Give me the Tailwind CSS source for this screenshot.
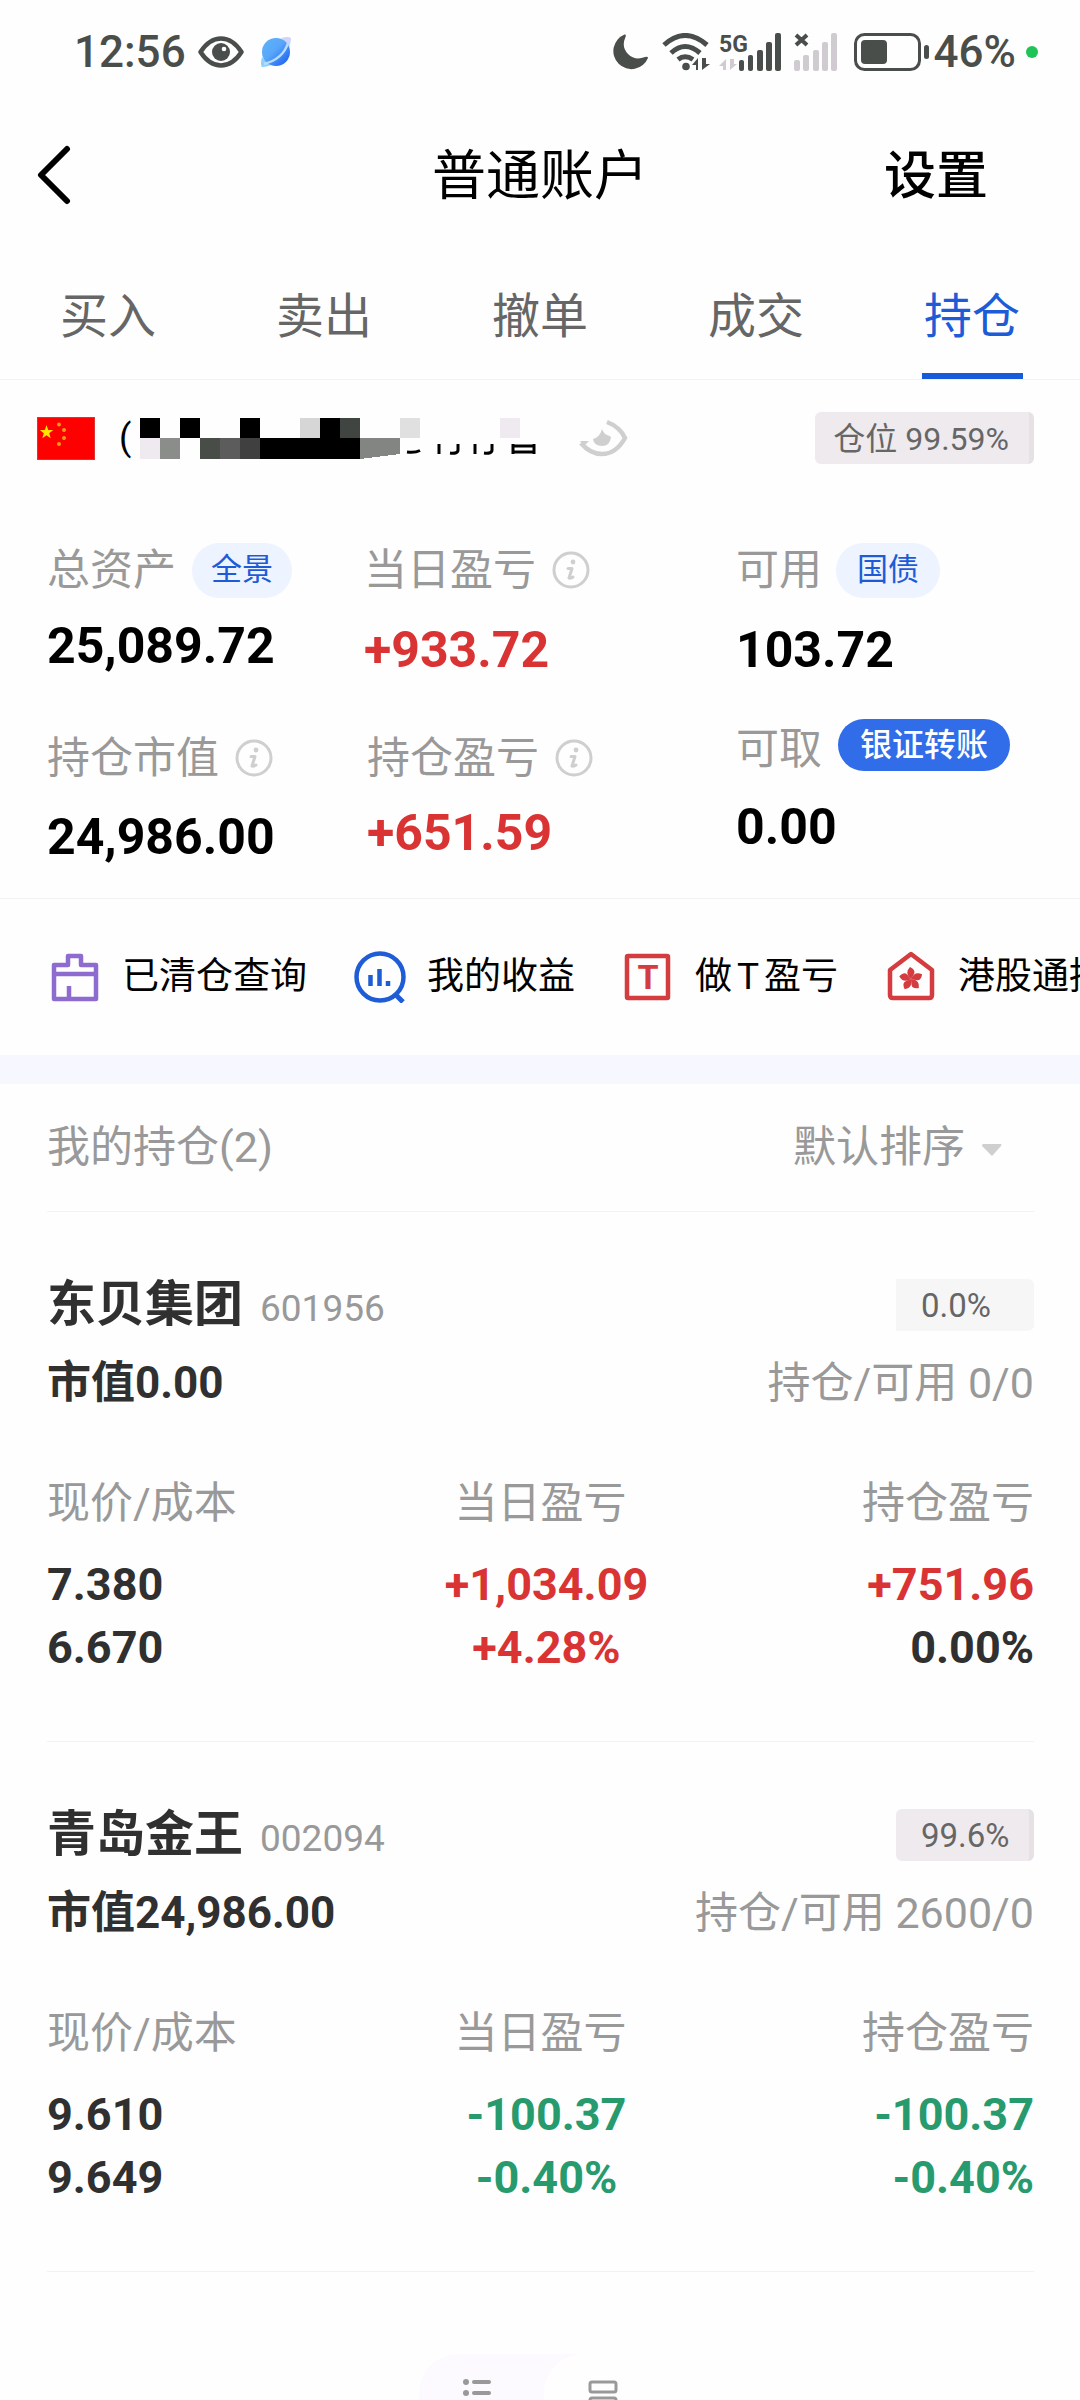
<!DOCTYPE html>
<html lang="zh-CN">
<head>
<meta charset="utf-8">
<meta name="viewport" content="width=device-width, initial-scale=1">
<title>普通账户</title>
<script src="https://cdn.jsdelivr.net/npm/@tailwindcss/browser@4"></script>
</head>
<body class="h-screen overflow-hidden bg-[#fefefe] font-['Roboto','Noto_Sans_CJK_SC',sans-serif] text-black">

<!-- Shared icons -->
<svg class="hidden" aria-hidden="true">
  <symbol id="info" viewBox="0 0 38 38">
    <circle cx="19" cy="19" r="17" fill="none" stroke="#cfcfcf" stroke-width="3"/>
    <circle cx="21" cy="11" r="2.4" fill="#cfcfcf"/>
    <path d="M16 17.500h4l-3 9.500q2 .5 4-1" fill="none" stroke="#cfcfcf" stroke-width="3" stroke-linecap="round" stroke-linejoin="round"/>
  </symbol>
</svg>

<!-- Status bar -->
<div class="flex h-[104px] items-center justify-between pl-[74px] pr-[42px] text-[44px] font-medium text-[#4a4e4a]">
  <div class="flex items-center">
    <span>12:56</span>
    <svg class="ml-3 h-[32px] w-[46px]" viewBox="0 0 46 32" aria-hidden="true">
      <path d="M2.500 16C9 6 16 2.500 23 2.500S37 6 43.500 16C37 26 30 29.500 23 29.500S9 26 2.500 16Z" fill="none" stroke="#4a4e4a" stroke-width="4.500" stroke-linejoin="round"/>
      <circle cx="23" cy="16" r="9" fill="#4a4e4a"/><circle cx="26" cy="13" r="2.300" fill="#fff"/>
    </svg>
    <svg class="ml-[17px] h-[30px] w-[30px]" viewBox="0 0 30 30" aria-hidden="true">
      <defs><linearGradient id="planet" x1="0" y1="0" x2="1" y2="1"><stop offset="0" stop-color="#5fb4fb"/><stop offset=".45" stop-color="#58a6fa"/><stop offset="1" stop-color="#1457ee"/></linearGradient></defs>
      <path d="M20 1Q28-1 30 1Q30 6 28 10Z" fill="#cfd5fa"/>
      <path d="M1 20Q-1 28 1 30Q6 30 10 28Z" fill="#8fd0fb"/>
      <circle cx="15" cy="15" r="14" fill="url(#planet)"/>
      <path d="M3 27Q22 22 27 6" fill="none" stroke="#b9dcfd" stroke-width="2.500"/>
    </svg>
  </div>
  <div class="flex items-center">
    <svg class="h-[38px] w-[38px]" viewBox="0 0 38 38" aria-hidden="true"><path d="M13.500 1.500A18 18 0 1 0 37 25Q37 23 34 24Q24 28 17 21T14.500 4Q15.500 1 13.500 1.500Z" fill="#4a4e4a"/></svg>
    <svg class="ml-[13px] h-[38px] w-[48px]" viewBox="0 0 48 38" fill="none" stroke="#4a4e4a" stroke-width="5" aria-hidden="true">
      <path d="M2 12Q23-7 45 12M9 20Q23 7 38 20M16 26.500Q23 21 31 26.500"/>
      <circle cx="24" cy="33.500" r="3.800" fill="#4a4e4a" stroke="none"/>
      <path d="M36 37V25l-6 7h4v5zM40 25V37l8-6h-4v-6z" fill="#4a4e4a" stroke="none"/>
    </svg>
    <svg class="ml-[9px] h-[38px] w-[64px] overflow-visible" viewBox="0 0 64 38" aria-hidden="true">
      <text x="0" y="19" font-size="23" font-weight="700" fill="#4a4e4a">5G</text>
      <path d="M7 37V26l-7 7h4v4zM11 26V37l7-6h-3v-5z" fill="#cfcbd0"/>
      <g fill="#4a4e4a"><rect x="20" y="27" width="5" height="11" rx="2"/><rect x="29" y="22" width="5" height="16" rx="2"/><rect x="38" y="17" width="6" height="21" rx="2"/><rect x="47" y="9" width="6" height="29" rx="2"/><rect x="56" y="0" width="6" height="38" rx="2"/></g>
    </svg>
    <svg class="ml-[11px] h-[38px] w-[46px]" viewBox="0 0 46 38" aria-hidden="true">
      <path d="M2 2l11 10M13 2L2 12" stroke="#4a4e4a" stroke-width="4"/>
      <g fill="#cfcbd0"><rect x="0" y="27" width="6" height="11" rx="2"/><rect x="9" y="22" width="6" height="16" rx="2"/><rect x="19" y="17" width="6" height="21" rx="2"/><rect x="28" y="9" width="6" height="29" rx="2"/><rect x="37" y="0" width="6" height="38" rx="2"/></g>
    </svg>
    <svg class="ml-[14px] h-[38px] w-[76px]" viewBox="0 0 76 38" aria-hidden="true">
      <rect x="1.500" y="1.500" width="64" height="35" rx="9" fill="none" stroke="#4a4e4a" stroke-width="3"/>
      <rect x="7" y="7" width="26" height="24" rx="4" fill="#4a4e4a"/>
      <rect x="70" y="12" width="5" height="14" rx="2.500" fill="#4a4e4a"/>
    </svg>
    <span class="ml-1">46%</span>
    <span class="ml-[10px] size-3 rounded-full bg-[#1fc356]"></span>
  </div>
</div>

<!-- Title bar -->
<header class="grid h-[142px] grid-cols-[1fr_auto_1fr] items-center">
  <a href="#" aria-label="返回" class="justify-self-start pl-[37px]">
    <svg class="h-[60px] w-[34px]" viewBox="0 0 34 60" fill="none" stroke="#000" stroke-width="6" stroke-linecap="round" stroke-linejoin="round"><path d="M30 4L4 30L30 56"/></svg>
  </a>
  <h1 class="pt-1 text-[54px] leading-[80px]">普通账户</h1>
  <button class="justify-self-end pt-1 pr-[92px] text-[52px] leading-[80px] font-medium">设置</button>
</header>

<!-- Tabs -->
<nav class="grid h-[134px] grid-cols-5 border-b border-[#f2f2f2] text-[48px] leading-[72px] text-[#666]">
  <a href="#" class="flex flex-col items-center pt-[35px]">买入</a>
  <a href="#" class="flex flex-col items-center pt-[35px]">卖出</a>
  <a href="#" class="flex flex-col items-center pt-[35px]">撤单</a>
  <a href="#" class="flex flex-col items-center pt-[35px]">成交</a>
  <a href="#" aria-current="page" class="flex flex-col items-center pt-[35px] text-[#1d5cd6]">持仓<span class="mt-auto h-[6px] w-[101px] bg-[#155bdc]"></span></a>
</nav>

<main>
  <!-- Account -->
  <div class="flex h-[116px] items-center pl-[37px] pr-[46px]">
    <svg class="h-[43px] w-[58px]" viewBox="0 0 58 43" role="img" aria-label="中国">
      <rect width="58" height="43" fill="#fe0000"/><rect x=".5" y=".5" width="57" height="42" fill="none" stroke="#d33"/>
      <path d="M9.500 8l1.700 5h5l-4 3.200 1.500 5-4.200-3-4.200 3 1.500-5-4-3.200h5z" fill="#ffe500"/>
      <g fill="#fb9a15"><circle cx="22" cy="7.500" r="2"/><circle cx="27" cy="13" r="2"/><circle cx="27" cy="21" r="2"/><circle cx="22" cy="27" r="2"/></g>
    </svg>
    <span class="ml-[24px] text-[36px] leading-[40px]">(</span>
    <svg class="ml-[9px] h-[41px] w-[400px]" viewBox="0 0 400 41" shape-rendering="crispEdges" aria-hidden="true">
      <path d="M0 0h20v20H0zM40 0h20v20H40zM100 0h20v20H100zM180 0h20v20H180zM120 20h100v21H120z"/>
      <path d="M160 0h20v20H160z" fill="#d6d6d6"/><path d="M200 0h20v20H200z" fill="#414541"/><path d="M260 0h20v20H260z" fill="#e0e0e0"/><path d="M360 0h20v20H360z" fill="#eeeaef"/>
      <path d="M0 20h20v21H0z" fill="#eeeaef"/><path d="M20 20h20v21H20z" fill="#8b8d8b"/><path d="M60 20h20v21H60z" fill="#484d48"/><path d="M80 20h20v21H80z" fill="#5b5c5b"/><path d="M100 20h20v21H100z" fill="#404040"/>
      <path d="M220 20h40v16l-40 5z" fill="#838583"/>
      <g fill="none" stroke="#000" stroke-width="3" shape-rendering="auto"><path d="M267 34q8 1 13-1.500"/><path d="M299 26v10M318 26v6q0 4-8 3M335 26v10M352 26v6q0 4-8 3M373 26v10M394 26v10M373 28h21M373 34h21"/></g>
    </svg>
    <button aria-label="隐藏金额" class="ml-[38px]">
      <svg class="h-[38px] w-[50px]" viewBox="0 0 50 38"><path d="M29 3Q42 8 47 19Q38 35 24 35Q12 35 3 24" fill="none" stroke="#cfcfcf" stroke-width="4.500"/><path d="M2 22h9l-5 5z" fill="#cfcfcf"/><path d="M24 10q2 5 5 6q3 1 4 2q-1 9-9 9t-9-7q7-2 9-10z" fill="#cfcfcf"/></svg>
    </button>
    <span class="ml-auto flex h-[52px] items-center rounded-md border-r-[5px] border-[#e5e1e5] bg-[#eeeaee] pl-[18px] pr-[20px] pt-[2px] text-[32px] text-[#666]">仓位 99.59%</span>
  </div>

  <!-- Assets -->
  <section class="grid grid-cols-[317fr_372fr_298fr] border-b border-[#f2f2f2] pb-[33px] pl-[47px] pr-[46px] pt-[46px] text-[50px] leading-[56px] font-bold">
    <dl class="flex flex-col">
      <dt class="flex items-center text-[43px] font-normal text-[#999]">总资产<button class="ml-[16px] h-[55px] rounded-full bg-[#edf3ff] px-[19px] text-[31px] leading-[52px] text-[#1d5cd6]">全景</button></dt>
      <dd class="mt-[20px]">25,089.72</dd>
      <dt class="mt-[56px] flex items-center text-[43px] font-normal text-[#999]">持仓市值<svg class="ml-[16px] size-[38px]" aria-hidden="true"><use href="#info"/></svg></dt>
      <dd class="mt-[23px]">24,986.00</dd>
    </dl>
    <dl class="flex flex-col">
      <dt class="flex items-center text-[43px] font-normal text-[#999]">当日盈亏<svg class="ml-[16px] size-[38px]" aria-hidden="true"><use href="#info"/></svg></dt>
      <dd class="mt-[24px] text-[#d93334]">+933.72</dd>
      <dt class="mt-[52px] flex items-center pl-[3px] text-[43px] font-normal text-[#999]">持仓盈亏<svg class="ml-[16px] size-[38px]" aria-hidden="true"><use href="#info"/></svg></dt>
      <dd class="mt-[19px] pl-[3px] text-[#d93334]">+651.59</dd>
    </dl>
    <dl class="flex flex-col">
      <dt class="flex items-center text-[43px] font-normal text-[#999]">可用<button class="ml-[14px] h-[55px] rounded-full bg-[#edf3ff] px-[21px] text-[31px] leading-[52px] text-[#1d5cd6]">国债</button></dt>
      <dd class="mt-[24px]">103.72</dd>
      <dt class="mt-[43px] flex items-start text-[43px] font-normal text-[#999]">可取<button class="ml-[16px] h-[52px] -mt-[2px] rounded-full bg-[#326de9] px-[22px] text-[32px] leading-[52px] font-medium text-white">银证转账</button></dt>
      <dd class="mt-[22px]">0.00</dd>
    </dl>
  </section>

  <!-- Shortcuts -->
  <nav class="flex h-[156px] items-center gap-[47px] overflow-hidden pl-[49px] text-[37px] whitespace-nowrap">
    <a href="#" class="flex shrink-0 items-center gap-[21px]">
      <svg class="size-[52px]" viewBox="0 0 52 52" fill="none" stroke="#8d6bcf" stroke-width="4.500" stroke-linejoin="round" aria-hidden="true"><path d="M5 14h14V5h13v9h15v34H5zM5 23h42M20 48V35"/></svg>
      已清仓查询</a>
    <a href="#" class="flex shrink-0 items-center gap-[21px]">
      <svg class="size-[52px]" viewBox="0 0 52 52" fill="none" stroke="#1f5dd6" stroke-width="4.500" aria-hidden="true"><circle cx="26" cy="26" r="23.500"/><path d="M42 44l7 7" stroke-width="5"/><path d="M16.500 24v11M25.500 18v17M34 30v5"/></svg>
      我的收益</a>
    <a href="#" class="flex shrink-0 items-center gap-[21px]">
      <svg class="size-[52px]" viewBox="0 0 52 52" aria-hidden="true"><rect x="5" y="5" width="41" height="42" rx="1" fill="none" stroke="#d43c3f" stroke-width="4.500"/><text x="26" y="38" text-anchor="middle" font-size="34" font-weight="700" fill="#d43c3f">T</text></svg>
      <span>做<span class="mx-[5px]">T</span>盈亏</span></a>
    <a href="#" class="flex shrink-0 items-center gap-[21px]">
      <svg class="size-[52px]" viewBox="0 0 52 52" aria-hidden="true"><path d="M5 19L26 3L47 19V44q0 3-3 3H8q-3 0-3-3z" fill="none" stroke="#d43c3f" stroke-width="4.500" stroke-linejoin="round"/>
        <g fill="#d43c3f"><path id="petal" d="M26 28q-7-6-1-12q6 3 4 7q-1 2-3 5z"/><use href="#petal" transform="rotate(72 26 28)"/><use href="#petal" transform="rotate(144 26 28)"/><use href="#petal" transform="rotate(216 26 28)"/><use href="#petal" transform="rotate(288 26 28)"/></g></svg>
      港股通持仓</a>
  </nav>

  <div class="h-[29px] bg-[#f7f7ff]"></div>

  <!-- Holdings -->
  <section class="pl-[47px] pr-[46px]">
    <div class="flex h-[128px] items-center justify-between border-b border-[#f2f2f2] text-[43px] text-[#999]">
      <h2>我的持仓(2)</h2>
      <label class="flex items-center pr-[32px]">
        <select aria-label="排序" class="appearance-none bg-transparent"><option>默认排序</option></select>
        <svg class="ml-[17px] mt-1 h-[12px] w-[20px]" viewBox="0 0 20 12" aria-hidden="true"><path d="M1 0h18q1 0 0 2l-9 10L0 2q0-2 1-2z" fill="#cfcfcf"/></svg>
      </label>
    </div>

    <article class="border-b border-[#f2f2f2] pb-[62px] pt-[63px] text-[43px] text-[#303030]">
      <div class="flex h-[60px] items-center justify-between">
        <h3 class="flex items-baseline text-[49px] font-bold">东贝集团<span class="ml-[17px] text-[37px] font-normal text-[#999]">601956</span></h3>
        <span class="flex h-[52px] w-[138px] items-center rounded-r-md bg-[#f6f6f6] pl-[25px] pt-[2px] text-[33px] text-[#666]">0.0%</span>
      </div>
      <div class="mt-[20px] flex justify-between leading-[56px]">
        <span class="text-[44px] font-bold">市值0.00</span>
        <span class="text-[#999]">持仓/可用 0/0</span>
      </div>
      <table class="mt-[64px] w-full table-fixed">
        <thead><tr class="h-[78px] align-top leading-[56px] text-[#999]">
          <th class="p-0 text-left font-normal">现价/成本</th><th class="p-0 text-center font-normal">当日盈亏</th><th class="p-0 text-right font-normal">持仓盈亏</th>
        </tr></thead>
        <tbody class="text-[45px] leading-[63px] font-bold">
          <tr><td class="p-0">7.380</td><td class="p-0 pl-3 text-center text-[#d93334]">+1,034.09</td><td class="p-0 text-right text-[#d93334]">+751.96</td></tr>
          <tr><td class="p-0">6.670</td><td class="p-0 pl-3 text-center text-[#d93334]">+4.28%</td><td class="p-0 text-right">0.00%</td></tr>
        </tbody>
      </table>
    </article>

    <article class="border-b border-[#f2f2f2] pb-[62px] pt-[63px] text-[43px] text-[#303030]">
      <div class="flex h-[60px] items-center justify-between">
        <h3 class="flex items-baseline text-[49px] font-bold">青岛金王<span class="ml-[17px] text-[37px] font-normal text-[#999]">002094</span></h3>
        <span class="flex h-[52px] w-[138px] items-center rounded-md border-r-[5px] border-[#e5e1e5] bg-[#eeeaee] pl-[25px] pt-[2px] text-[33px] text-[#666]">99.6%</span>
      </div>
      <div class="mt-[20px] flex justify-between leading-[56px]">
        <span class="text-[44px] font-bold">市值24,986.00</span>
        <span class="text-[#999]">持仓/可用 2600/0</span>
      </div>
      <table class="mt-[64px] w-full table-fixed">
        <thead><tr class="h-[78px] align-top leading-[56px] text-[#999]">
          <th class="p-0 text-left font-normal">现价/成本</th><th class="p-0 text-center font-normal">当日盈亏</th><th class="p-0 text-right font-normal">持仓盈亏</th>
        </tr></thead>
        <tbody class="text-[45px] leading-[63px] font-bold">
          <tr><td class="p-0">9.610</td><td class="p-0 pl-3 text-center text-[#279a6e]">-100.37</td><td class="p-0 text-right text-[#279a6e]">-100.37</td></tr>
          <tr><td class="p-0">9.649</td><td class="p-0 pl-3 text-center text-[#279a6e]">-0.40%</td><td class="p-0 text-right text-[#279a6e]">-0.40%</td></tr>
        </tbody>
      </table>
    </article>
  </section>

  <!-- View switch -->
  <div class="mx-auto mt-[82px] flex h-[78px] w-[242px] rounded-full bg-[#fdfaff]">
    <button aria-label="列表视图" class="flex w-[125px] justify-center pr-[10px] pt-[24px]">
      <svg class="h-[30px] w-[30px]" viewBox="0 0 30 30" fill="#999"><circle cx="4" cy="4" r="3"/><circle cx="4" cy="15" r="3"/><circle cx="4" cy="26" r="3"/><rect x="10" y="2" width="19" height="4" rx="2"/><rect x="10" y="13" width="19" height="4" rx="2"/><rect x="10" y="24" width="19" height="4" rx="2"/></svg>
    </button>
    <button aria-label="卡片视图" class="flex flex-1 justify-center rounded-full bg-[#fefefe] pt-[26px]">
      <svg class="h-[30px] w-[30px]" viewBox="0 0 30 30" fill="none" stroke="#999" stroke-width="3"><rect x="2" y="2" width="26" height="10" rx="2"/><rect x="2" y="18" width="26" height="10" rx="2"/></svg>
    </button>
  </div>
</main>
</body>
</html>
